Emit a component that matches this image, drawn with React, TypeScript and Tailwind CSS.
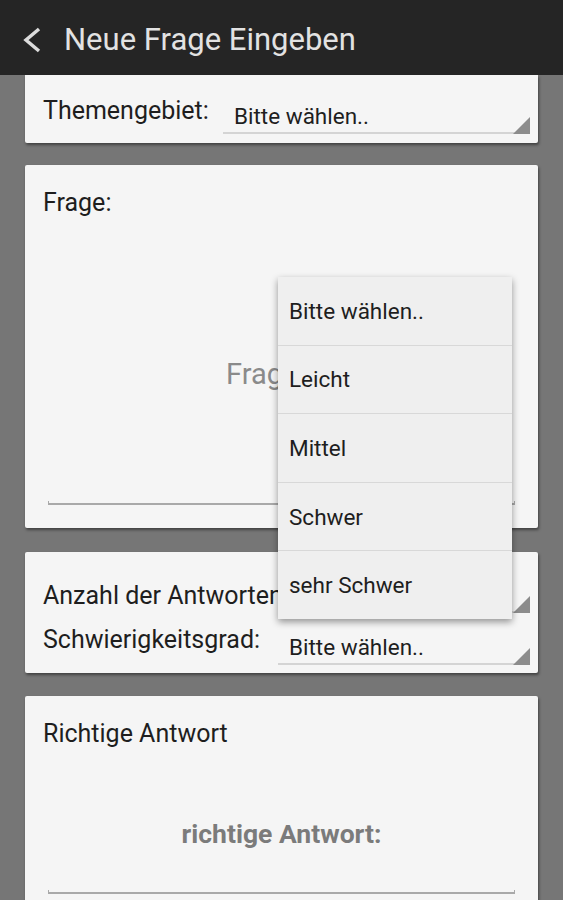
const SpinnerArrow = () => (
  <svg
    className="absolute right-0 bottom-0"
    width="17"
    height="17"
    viewBox="0 0 17 17"
  >
    <polygon points="17,0 17,17 0,17" fill="#8c8c8c" />
  </svg>
);

const Spinner = ({ text, className }: { text?: string; className?: string }) => {
  return (
    <div className={`relative ${className ?? ""}`}>
      <div className="pl-[11px] pb-[3px] border-b-2 border-[#d4d4d4] mr-[6px]">
        <span className="block text-[22.5px] leading-[26px] text-[#1e1e1e] h-[26px]">
          {text}
        </span>
      </div>
      <SpinnerArrow />
    </div>
  );
};

const FieldLine = ({ className }: { className?: string }) => (
  <div
    className={`mx-[23px] h-[4px] border-x border-b-2 border-[#a9a9a9] ${className ?? ""}`}
  />
);

const options = ["Bitte wählen..", "Leicht", "Mittel", "Schwer", "sehr Schwer"];

export default function App() {
  return (
    <div
      className="relative h-[900px] w-full overflow-hidden bg-[#767676] flex flex-col"
      style={{ fontFamily: "Roboto, 'Noto Sans', sans-serif" }}
    >
      {/* action bar */}
      <div className="h-[75px] shrink-0 bg-[#252525] flex items-center pt-[5px] z-10">
        <svg className="ml-[22px]" width="20" height="26" viewBox="0 0 20 26">
          <polyline
            points="17,2 4,13 17,24"
            fill="none"
            stroke="#dcdcdc"
            strokeWidth="3.5"
          />
        </svg>
        <h1 className="ml-[22px] text-[31px] leading-[36px] text-[#e2e2e2]">
          Neue Frage Eingeben
        </h1>
      </div>

      <div className="flex flex-col px-[25px]">
        {/* Themengebiet */}
        <div className="h-[68px] bg-[#f5f5f5] rounded-b-[2px] shadow-[1px_2px_3px_rgba(0,0,0,0.45)] flex items-start pl-[18px] pr-[8px]">
          <span className="mt-[22px] text-[25px] leading-[28px] text-[#1e1e1e]">
            Themengebiet:
          </span>
          <Spinner text="Bitte wählen.." className="ml-auto mt-[28px] w-[307px]" />
        </div>

        {/* Frage */}
        <div className="mt-[22px] h-[363px] bg-[#f5f5f5] rounded-[2px] shadow-[1px_2px_3px_rgba(0,0,0,0.45)] flex flex-col">
          <span className="mt-[24px] ml-[18px] text-[25px] leading-[28px] text-[#1e1e1e]">
            Frage:
          </span>
          <span className="mt-[140px] ml-[201px] text-[29px] leading-[34px] text-[#8a8a8a]">
            Frage:
          </span>
          <FieldLine className="mt-[110px]" />
        </div>

        {/* Anzahl / Schwierigkeitsgrad */}
        <div className="mt-[24px] h-[121px] bg-[#f5f5f5] rounded-[2px] shadow-[1px_2px_3px_rgba(0,0,0,0.45)] flex flex-col pt-[30px] pl-[18px] pr-[8px]">
          <div className="flex items-start">
            <span className="w-[235px] text-[25px] leading-[28px] text-[#1e1e1e] whitespace-nowrap">
              Anzahl der Antworten:
            </span>
            <Spinner className="flex-1" />
          </div>
          <div className="mt-[13px] flex items-start">
            <span className="w-[235px] text-[25px] leading-[28px] text-[#1e1e1e] whitespace-nowrap">
              Schwierigkeitsgrad:
            </span>
            <Spinner text="Bitte wählen.." className="flex-1 mt-[8px]" />
          </div>
        </div>

        {/* Richtige Antwort */}
        <div className="mt-[23px] h-[260px] bg-[#f5f5f5] rounded-[2px] shadow-[1px_2px_3px_rgba(0,0,0,0.45)] flex flex-col">
          <span className="mt-[24px] ml-[18px] text-[25px] leading-[28px] text-[#1e1e1e]">
            Richtige Antwort
          </span>
          <span className="mt-[71px] text-center font-bold text-[26.5px] leading-[30px] text-[#7b7b7b]">
            richtige Antwort:
          </span>
          <FieldLine className="mt-[41px]" />
        </div>
      </div>

      {/* dropdown menu */}
      <div className="absolute left-[278px] top-[277px] w-[234px] h-[342px] bg-[#efefef] shadow-[0_3px_7px_rgba(0,0,0,0.4)] flex flex-col divide-y divide-[#d8d8d8] z-20">
        {options.map((opt) => (
          <div key={opt} className="flex-1 flex items-center pl-[11px]">
            <span className="text-[22.5px] leading-[26px] text-[#1e1e1e]">{opt}</span>
          </div>
        ))}
      </div>
    </div>
  );
}
